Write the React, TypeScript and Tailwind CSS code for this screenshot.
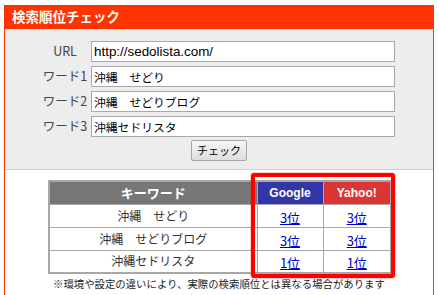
const fields = [
  { label: 'URL', value: 'http://sedolista.com/', url: true },
  { label: 'ワード1', value: '沖縄　せどり' },
  { label: 'ワード2', value: '沖縄　せどりブログ' },
  { label: 'ワード3', value: '沖縄セドリスタ' },
]

const rows = [
  { keyword: '沖縄　せどり', google: '3位', yahoo: '3位' },
  { keyword: '沖縄　せどりブログ', google: '3位', yahoo: '3位' },
  { keyword: '沖縄セドリスタ', google: '1位', yahoo: '1位' },
]

const jp = { fontFamily: '"Noto Sans CJK JP", sans-serif' }
const latin = { fontFamily: '"Liberation Sans", Arial, sans-serif' }

export default function App() {
  return (
    <div className="w-[439px] h-[295px] overflow-hidden bg-white pt-[5px] pl-[4px]" style={jp}>
      <div className="w-[430px] h-[300px] border-x border-[#ff3c00] bg-white">
        {/* title bar */}
        <div className="h-[24px] bg-[#ff3300] flex items-center pl-[8px] -mx-px">
          <h1 className="text-[13.5px] font-bold text-white leading-none">検索順位チェック</h1>
        </div>

        {/* form */}
        <div className="bg-[#ededed] pt-[12px] pb-[8px] border-b border-[#cfcfcf]">
          <div className="flex flex-col gap-[4px]">
            {fields.map((f) => (
              <div key={f.label} className="flex items-center pl-[35px]">
                <label className="w-[50px] text-center text-[12.5px] text-[#444] leading-none">{f.label}</label>
                <input
                  readOnly
                  value={f.value}
                  className={
                    'ml-px w-[304px] h-[21px] border border-[#a9a9a9] bg-white px-[2px] text-black outline-none ' +
                    (f.url ? 'text-[13.4px]' : 'text-[11.8px]')
                  }
                  style={f.url ? latin : jp}
                />
              </div>
            ))}
          </div>
          <div className="flex justify-center mt-[3px]">
            <button className="w-[56px] h-[21px] border border-[#a6a6a6] rounded-[2px] bg-gradient-to-b from-[#f6f6f6] to-[#dedede] text-[11px] text-black leading-none">
              チェック
            </button>
          </div>
        </div>

        {/* results */}
        <div className="pt-[10px] pl-[43px]">
          <div className="relative w-[342px]">
            <table className="w-[342px] border-collapse border-2 border-[#a8a8a8] table-fixed leading-none">
              <colgroup>
                <col className="w-[208px]" />
                <col className="w-[66px]" />
                <col className="w-[68px]" />
              </colgroup>
              <thead>
                <tr className="h-[23px]">
                  <th className="bg-[#777777] border border-[#a8a8a8] text-white text-[13px] font-bold p-0 leading-none">キーワード</th>
                  <th className="bg-[#3535aa] border border-[#a8a8a8] text-white text-[12px] font-bold p-0 leading-none" style={latin}>
                    Google
                  </th>
                  <th className="bg-[#dd3535] border border-[#a8a8a8] text-white text-[12px] font-bold p-0 leading-none" style={latin}>
                    Yahoo!
                  </th>
                </tr>
              </thead>
              <tbody>
                {rows.map((r) => (
                  <tr key={r.keyword} className="h-[23px]">
                    <td className="border border-[#a8a8a8] text-center text-[12px] text-[#333] p-0 leading-none">{r.keyword}</td>
                    <td className="border border-[#a8a8a8] text-center p-0 leading-none">
                      <a className="text-[13px] text-[#0000cc] underline leading-none">{r.google}</a>
                    </td>
                    <td className="border border-[#a8a8a8] text-center p-0 leading-none">
                      <a className="text-[13px] text-[#0000cc] underline leading-none">{r.yahoo}</a>
                    </td>
                  </tr>
                ))}
              </tbody>
            </table>
            {/* red highlight around search engine columns */}
            <div className="absolute left-[203px] top-[-7px] w-[144px] h-[105px] border-[4px] border-[#ff0000] rounded-[3px] shadow-[0_0_1.5px_#ff0000] pointer-events-none" />
          </div>
          <p className="mt-[3px] pl-[5px] text-[10.4px] text-[#222] leading-[14px] whitespace-nowrap">
            ※環境や設定の違いにより、実際の検索順位とは異なる場合があります
          </p>
        </div>
      </div>
    </div>
  )
}
